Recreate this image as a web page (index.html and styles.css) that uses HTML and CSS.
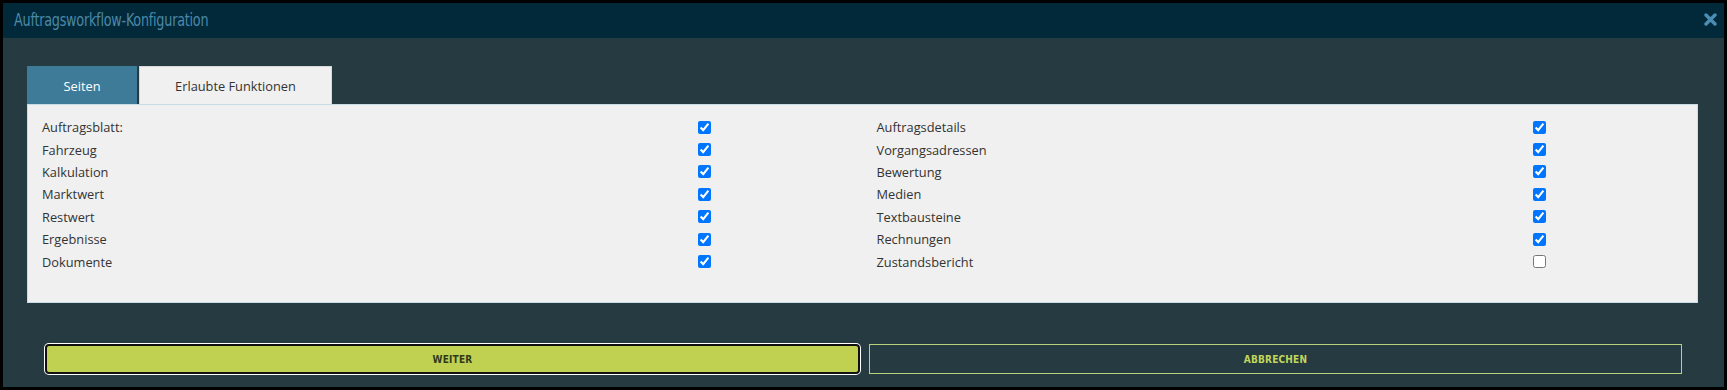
FILE: index.html
```html
<!DOCTYPE html>
<html lang="de">
<head>
  <meta charset="UTF-8" />
  <meta name="viewport" content="width=device-width, initial-scale=1.0"/>
  <title>Auftragsworkflow-Konfiguration</title>
  <link rel="stylesheet" href="styles.css">
</head>
<body>

  <!-- Dialog -->
  <div class="dialog">
    <div class="dialog-header">
      <span class="dialog-title">Auftragsworkflow-Konfiguration</span>
      <span class="dialog-close">
        <svg width="13" height="13" viewBox="0 0 13 13">
          <path d="M2 2 L11 11 M11 2 L2 11" stroke="#4b8db3" stroke-width="3.4" stroke-linecap="round"/>
        </svg>
      </span>
    </div>

    <div class="dialog-body">
      <!-- Tabs -->
      <div class="tabs">
        <div class="tab active">Seiten</div>
        <div class="tab">Erlaubte Funktionen</div>
      </div>

      <div class="panel">
        <div class="col">
          <div class="row"><span>Auftragsblatt:</span><input type="checkbox" checked></div>
          <div class="row"><span>Fahrzeug</span><input type="checkbox" checked></div>
          <div class="row"><span>Kalkulation</span><input type="checkbox" checked></div>
          <div class="row"><span>Marktwert</span><input type="checkbox" checked></div>
          <div class="row"><span>Restwert</span><input type="checkbox" checked></div>
          <div class="row"><span>Ergebnisse</span><input type="checkbox" checked></div>
          <div class="row"><span>Dokumente</span><input type="checkbox" checked></div>
        </div>
        <div class="col">
          <div class="row"><span>Auftragsdetails</span><input type="checkbox" checked></div>
          <div class="row"><span>Vorgangsadressen</span><input type="checkbox" checked></div>
          <div class="row"><span>Bewertung</span><input type="checkbox" checked></div>
          <div class="row"><span>Medien</span><input type="checkbox" checked></div>
          <div class="row"><span>Textbausteine</span><input type="checkbox" checked></div>
          <div class="row"><span>Rechnungen</span><input type="checkbox" checked></div>
          <div class="row"><span>Zustandsbericht</span><input type="checkbox"></div>
        </div>
      </div>

      <!-- Buttons -->
      <div class="actions">
        <button class="btn btn-primary">WEITER</button>
        <button class="btn btn-outline">ABBRECHEN</button>
      </div>
    </div>
  </div>

</body>
</html>
```

FILE: styles.css
```css
html, body {
  margin: 0;
  height: 100%;
}

body {
  background: #000;
  padding: 3px;
  box-sizing: border-box;
  font-family: 'Open Sans', sans-serif;
  font-size: 12.8px;
  color: #333;
}

.dialog {
  height: 100%;
  display: flex;
  flex-direction: column;
  background-color: #253a41;
}

.dialog-header {
  height: 35px;
  flex: none;
  display: flex;
  align-items: center;
  justify-content: space-between;
  padding: 0 7px 0 11px;
  background-color: #02293a;
}

.dialog-title {
  font-family: 'DejaVu Sans Condensed', 'DejaVu Sans', sans-serif;
  font-stretch: condensed;
  font-size: 18px;
  color: #4b88a7;
  display: inline-block;
  transform: scaleX(0.79);
  transform-origin: left center;
  letter-spacing: -0.3px;
  margin-top: -2px;
}

.dialog-close {
  display: flex;
  margin-top: -3px;
}

.dialog-body {
  flex: 1;
  padding: 28px 26px 0 24px;
}

.tabs {
  display: flex;
  gap: 2px;
  height: 38px;
}

.tab {
  display: flex;
  align-items: center;
  justify-content: center;
  width: 193px;
  background-color: #f0f0f0;
  color: #333;
  border: 1px solid #d8d8d8;
  border-bottom: none;
  box-sizing: border-box;
}

.tab.active {
  width: 110px;
  background-color: #3e7b98;
  border-color: #3e7b98;
  color: #fff;
}

.panel {
  display: grid;
  grid-template-columns: 1fr 1fr;
  height: 199px;
  box-sizing: border-box;
  padding-top: 11px;
  background-color: #f0f0f0;
  border: 1px solid #c9dbe6;
}

.col {
  padding: 0 15px 0 14px;
}

.row {
  display: grid;
  grid-template-columns: 656px 13px;
  align-items: center;
  height: 22.4px;
}

.row input {
  margin: 0;
  width: 13px;
  height: 13px;
}

.actions {
  display: flex;
  gap: 9px;
  margin: 41px 16px 0 18px;
}

.btn {
  flex: 1;
  height: 30px;
  font-family: 'DejaVu Sans Condensed', 'DejaVu Sans', sans-serif;
  font-stretch: condensed;
  font-weight: bold;
  font-size: 10px;
  letter-spacing: 0.2px;
  cursor: pointer;
}

.btn-primary {
  background-color: #c0d152;
  color: #303a1c;
  border: 2px solid #111;
  border-radius: 4px;
  box-shadow: 0 0 0 1px #fff;
}

.btn-outline {
  background-color: transparent;
  color: #c2d65a;
  border: 1px solid #b8d27a;
  border-radius: 0;
}
```
